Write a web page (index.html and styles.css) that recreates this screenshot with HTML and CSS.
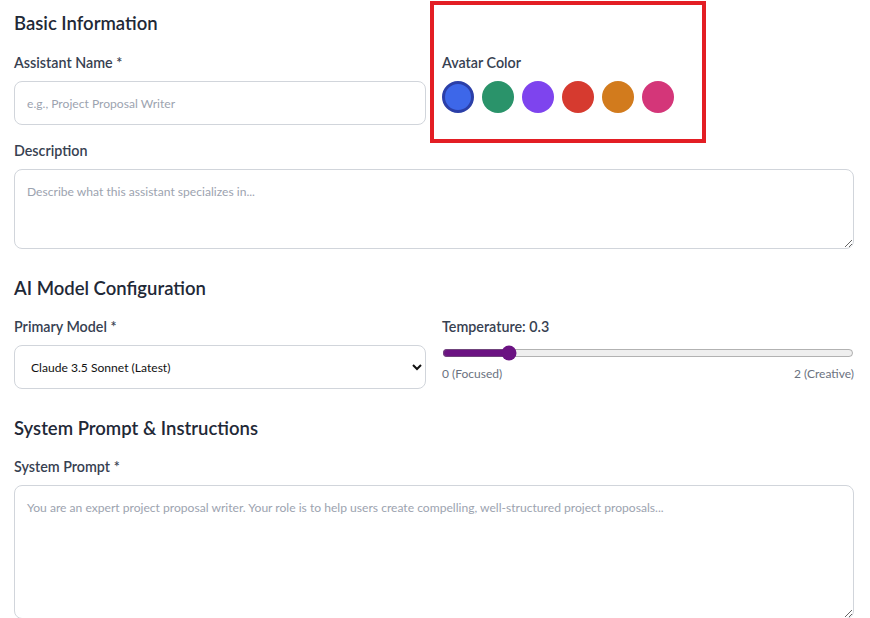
FILE: index.html
```html
<!DOCTYPE html>
<html>
<head>
<meta charset="utf-8">
<link rel="stylesheet" href="styles.css">
</head>
<body>
<div class="page">
  <section class="section">
    <h2 class="heading">Basic Information</h2>
    <div class="row">
      <div class="group">
        <label class="label">Assistant Name *</label>
        <input class="input" type="text" placeholder="e.g., Project Proposal Writer">
      </div>
      <div class="group">
        <label class="label">Avatar Color</label>
        <div class="swatches">
          <span class="swatch selected" style="background:#3d67e9"></span>
          <span class="swatch" style="background:#2a936a"></span>
          <span class="swatch" style="background:#7e44ee"></span>
          <span class="swatch" style="background:#d63a2f"></span>
          <span class="swatch" style="background:#d27b1d"></span>
          <span class="swatch" style="background:#d43679"></span>
        </div>
      </div>
    </div>
    <div class="group">
      <label class="label">Description</label>
      <textarea class="textarea desc" placeholder="Describe what this assistant specializes in..."></textarea>
    </div>
  </section>

  <section class="section">
    <h2 class="heading">AI Model Configuration</h2>
    <div class="row">
      <div class="group">
        <label class="label">Primary Model *</label>
        <select class="select">
          <option>Claude 3.5 Sonnet (Latest)</option>
        </select>
      </div>
      <div class="group">
        <label class="label">Temperature: 0.3</label>
        <input class="range" type="range" min="0" max="2" step="0.1" value="0.3">
        <div class="range-labels">
          <span>0 (Focused)</span>
          <span>2 (Creative)</span>
        </div>
      </div>
    </div>
  </section>

  <section class="section">
    <h2 class="heading">System Prompt &amp; Instructions</h2>
    <div class="group">
      <label class="label">System Prompt *</label>
      <textarea class="textarea prompt" placeholder="You are an expert project proposal writer. Your role is to help users create compelling, well-structured project proposals..."></textarea>
    </div>
  </section>

  <div class="highlight"></div>
</div>
</body>
</html>
```

FILE: styles.css
```css
* { box-sizing: border-box; }
html, body {
  margin: 0;
  padding: 0;
  background: #ffffff;
  height: 618px;
  overflow: hidden;
}
body {
  font-family: "Lato", "Noto Sans", sans-serif;
  color: #1f2937;
}
.page {
  position: relative;
  padding: 11px 16px 0 14px;
}
.section {
  padding-bottom: 11px;
}
.heading {
  font-size: 18.5px;
  line-height: 24px;
  font-weight: 600;
  margin: 0 0 17px;
  color: #1f2937;
}
.section:first-child .heading {
  margin-bottom: 18px;
}
.row {
  display: grid;
  grid-template-columns: 1fr 1fr;
  column-gap: 16px;
}
.group {
  display: flex;
  flex-direction: column;
  margin-bottom: 16px;
}
.label {
  font-size: 14.3px;
  line-height: 20px;
  font-weight: 600;
  color: #374151;
  margin-bottom: 8px;
}
.input, .textarea, .select {
  font-family: inherit;
  font-size: 12.1px;
  border: 1px solid #d1d5db;
  border-radius: 8px;
  background: #fff;
  color: #111827;
  width: 100%;
}
.input {
  height: 44px;
  padding: 0 12px;
}
.input::placeholder, .textarea::placeholder {
  color: #9ca3af;
}
.textarea {
  padding: 12px;
  line-height: 20px;
  resize: vertical;
  display: block;
}
.desc { height: 80px; }
.prompt { height: 134px; }
.select {
  height: 44px;
  padding: 0 12px;
  color: #111;
}
.swatches {
  display: flex;
  gap: 8px;
}
.swatch {
  width: 32px;
  height: 32px;
  border-radius: 50%;
  display: block;
}
.swatch.selected {
  border: 3px solid #2b3fa8;
}
.range {
  width: 100%;
  margin: 0 0 5px;
  accent-color: #6b1382;
}
.range-labels {
  display: flex;
  justify-content: space-between;
  font-size: 12px;
  line-height: 16px;
  color: #6b7280;
}
.highlight {
  position: absolute;
  left: 430px;
  top: 1px;
  width: 276px;
  height: 142px;
  border: 4px solid #e31e24;
}
```
